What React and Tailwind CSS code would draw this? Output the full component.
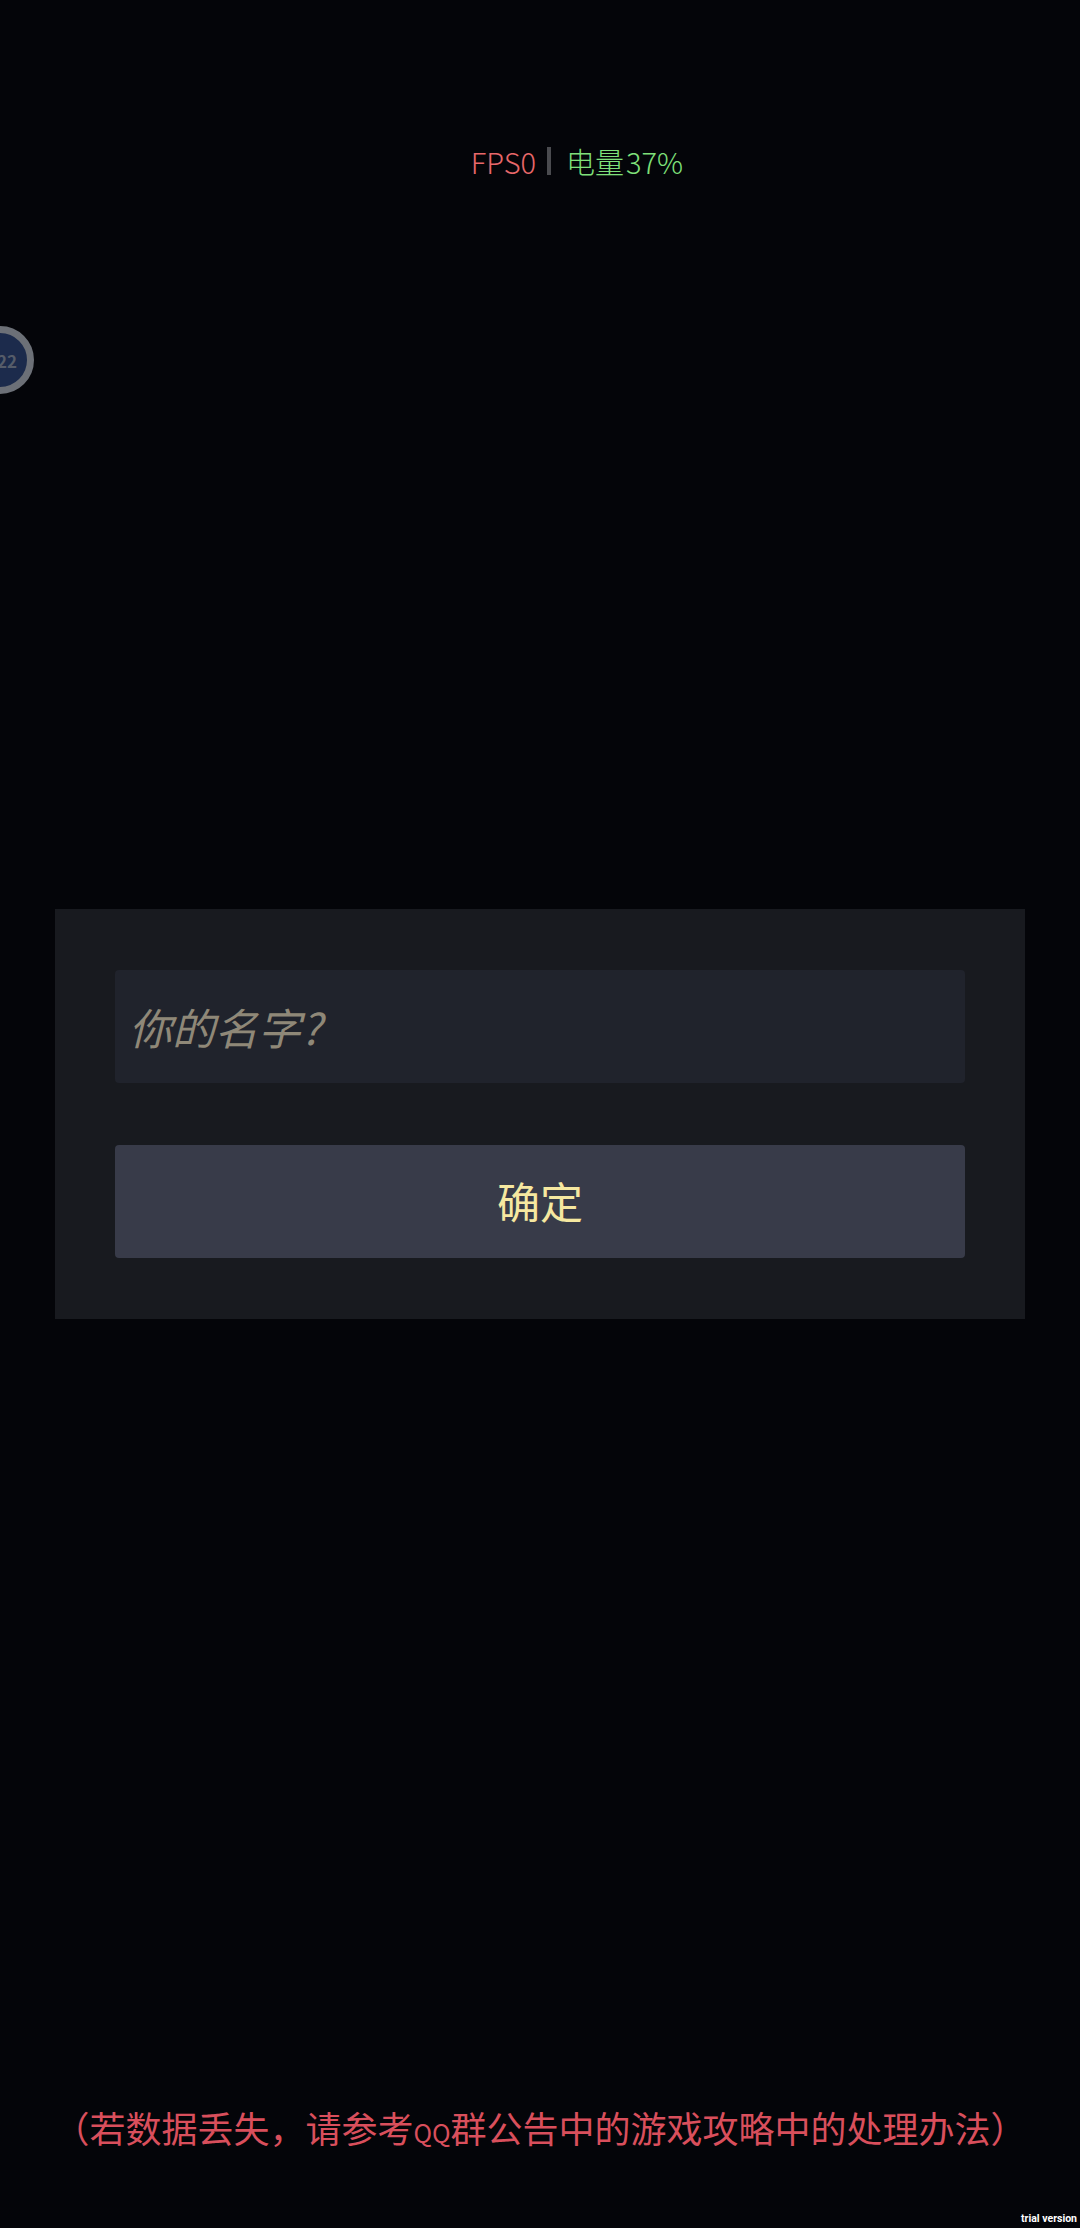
import React from "react";

const cjk = "font-['Noto_Sans_CJK_SC','Noto_Sans',sans-serif]";

const App = () => {
  return (
    <div className={`relative h-[2228px] w-[1080px] overflow-hidden bg-[#040509] ${cjk}`}>
      {/* floating badge stuck to the left edge */}
      <div className="absolute left-[-34px] top-[326px] flex h-[68px] w-[68px] items-center justify-end rounded-full border-[7px] border-[#6c7077] bg-[#1c2b4c] pr-[10px]">
        <span className="text-[17px] font-bold leading-none text-[#555c69]">22</span>
      </div>

      <div className="flex flex-col items-center">
        <div className="mt-[141px] flex h-[40px] items-center pl-[74px] text-[29px] font-light leading-none">
          <span className="text-[#e8686a]">FPS0</span>
          <span className="ml-[11px] mr-[15px] h-[28px] w-[4px] bg-[#4a4b4f]" />
          <span className="text-[#7fe07a]">电量</span>
          <span className="ml-[2px] text-[#7fe07a]">37%</span>
        </div>

        <div className="mt-[728px] flex w-[970px] flex-col gap-[62px] bg-[#181a1f] px-[60px] pb-[61px] pt-[61px]">
          <div className="flex h-[113px] items-center rounded-[4px] bg-[#20232c] pl-[14px]">
            <span className="text-[43px] italic leading-none text-[#8f8878]">你的名字?</span>
          </div>
          <button className="flex h-[113px] items-center justify-center rounded-[4px] bg-[#383b49] pb-[3px] text-[43px] leading-none text-[#f6e8a0]">
            确定
          </button>
        </div>

        <p className="mt-[790px] whitespace-nowrap text-[36px] leading-none text-[#d94f5c]">
          （若数据丢失，请参考<span className="text-[25px]">QQ</span>群公告中的游戏攻略中的处理办法）
        </p>
      </div>

      <span className="absolute bottom-[4px] right-[3px] font-['Roboto',sans-serif] text-[10.5px] font-bold leading-none text-white">
        trial version
      </span>
    </div>
  );
};

export default App;
